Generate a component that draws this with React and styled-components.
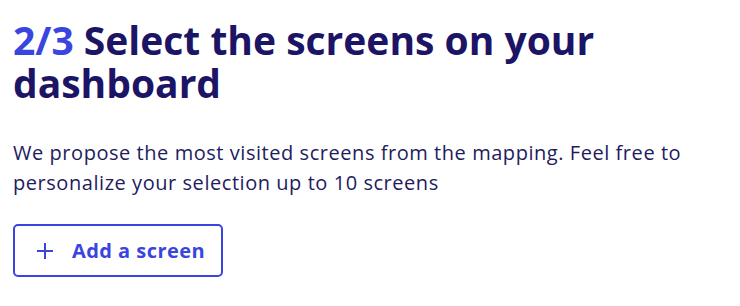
import React from 'react';
import styled, { createGlobalStyle } from 'styled-components';

const GlobalStyle = createGlobalStyle`
  body {
    margin: 0;
    background: #ffffff;
    font-family: "Open Sans", Lato, sans-serif;
  }
`;

const Page = styled.div`
  display: flex;
  flex-direction: column;
  align-items: flex-start;
  padding: 18px 13px;
`;

const Title = styled.h1`
  margin: 0;
  font-size: 39px;
  line-height: 43px;
  font-weight: 700;
  color: #1c1464;
  max-width: 640px;
`;

const Step = styled.span`
  color: #3a45e0;
`;

const Lead = styled.p`
  margin: 34px 0 0;
  font-size: 20px;
  line-height: 30px;
  letter-spacing: 0.55px;
  color: #221c5e;
  max-width: 700px;
`;

const Button = styled.button`
  display: flex;
  align-items: center;
  gap: 18px;
  margin-top: 26px;
  height: 53px;
  padding: 0 16px 0 21px;
  border: 2px solid #3a45e0;
  border-radius: 5px;
  background: #ffffff;
  color: #3a45e0;
  font-family: inherit;
  font-size: 20px;
  font-weight: 700;
  letter-spacing: 0.45px;
  cursor: pointer;
`;

const Plus = () => (
  <svg width="18" height="18" viewBox="0 0 18 18" fill="none">
    <path d="M9 1v16M1 9h16" stroke="currentColor" strokeWidth="2" />
  </svg>
);

export default function App() {
  return (
    <>
      <GlobalStyle />
      <Page>
        <Title>
          <Step>2/3</Step> Select the screens on your dashboard
        </Title>
        <Lead>
          We propose the most visited screens from the mapping. Feel free to
          personalize your selection up to 10 screens
        </Lead>
        <Button>
          <Plus />
          Add a screen
        </Button>
      </Page>
    </>
  );
}
